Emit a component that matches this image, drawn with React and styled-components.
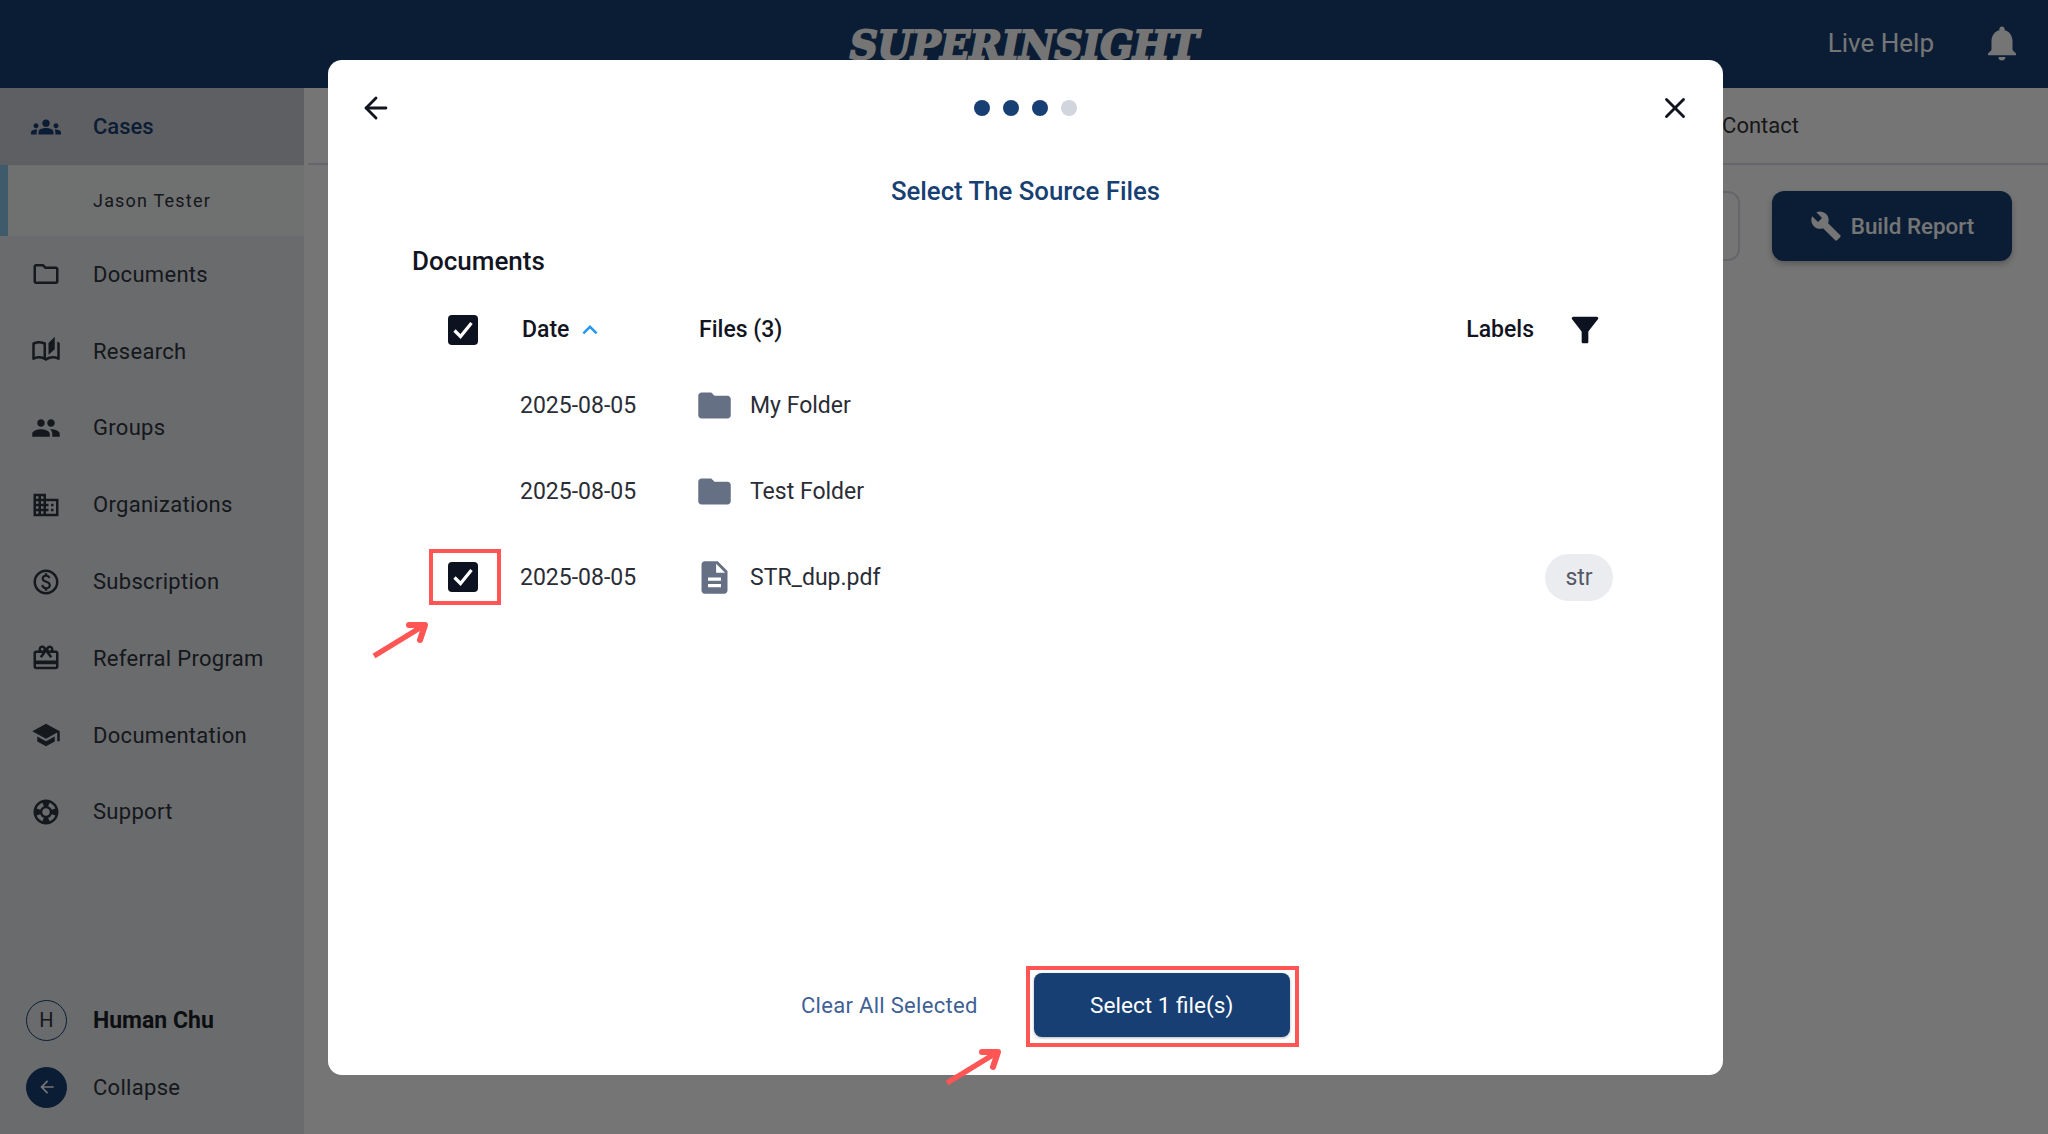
import React from "react";
import styled, { createGlobalStyle } from "styled-components";
import {
  MdGroups,
  MdOutlineFolder,
  MdOutlineAutoStories,
  MdPeople,
  MdOutlineDomain,
  MdOutlinePaid,
  MdOutlineRedeem,
  MdSchool,
  MdSupport,
  MdNotifications,
  MdBuild,
  MdFolder,
  MdDescription,
  MdFilterAlt,
  MdKeyboardArrowUp,
  MdArrowBack,
} from "react-icons/md";
import { ArrowLeft, X } from "lucide-react";

const NAVY = "#183f73";
const RED = "#ff5555";

const GlobalStyle = createGlobalStyle`
  html, body { margin: 0; padding: 0; height: 100%; }
  body { font-family: Roboto, "Liberation Sans", sans-serif; background: #fff; }
  * { box-sizing: border-box; }
`;

const Page = styled.div`
  position: relative;
  width: 100%;
  height: 100vh;
  display: flex;
  flex-direction: column;
  overflow: hidden;
`;

const Header = styled.header`
  height: 88px;
  flex: none;
  display: grid;
  grid-template-columns: 1fr auto 1fr;
  align-items: center;
  background: ${NAVY};
  color: #fff;
  padding: 0 25px;
`;

const Logo = styled.div`
  grid-column: 2;
  font-family: "DejaVu Serif", serif;
  font-weight: 700;
  font-style: italic;
  font-size: 39px;
  letter-spacing: -0.4px;
  -webkit-text-stroke: 2px #fff;
  padding-top: 2px;
`;

const HeaderRight = styled.div`
  grid-column: 3;
  display: flex;
  justify-content: flex-end;
  align-items: center;
  gap: 47px;
  font-size: 26px;
  line-height: 40px;
  padding-bottom: 2px;
`;

const Body = styled.div`
  flex: 1;
  display: flex;
  min-height: 0;
`;

const Sidebar = styled.nav`
  width: 304px;
  flex: none;
  display: flex;
  flex-direction: column;
  background: #e6e9ed;
  color: #2f3540;
`;

const CasesRow = styled.div`
  height: 77px;
  display: flex;
  align-items: center;
  padding-left: 31px;
  gap: 32px;
  background: #cdcfd7;
  color: ${NAVY};
  font-size: 22px;
  font-weight: 500;
`;

const SubRow = styled.div`
  height: 71px;
  display: flex;
  align-items: center;
  padding-left: 85px;
  background: #f1f3f5;
  border-left: 8px solid #87c4e9;
  font-size: 18px;
  letter-spacing: 1.2px;
`;

const NavList = styled.div`
  display: flex;
  flex-direction: column;
`;

const NavRow = styled.div`
  height: 76.8px;
  display: flex;
  align-items: center;
  padding-left: 31px;
  gap: 32px;
  font-size: 22px;
  letter-spacing: 0.3px;
  svg { flex: none; }
`;

const SideFooter = styled.div`
  margin-top: auto;
  display: flex;
  flex-direction: column;
  gap: 25px;
  padding: 0 0 26px 26px;
`;

const FooterRow = styled.div`
  display: flex;
  align-items: center;
  gap: 26px;
  height: 42px;
  font-size: ${(p) => (p.$bold ? "23px" : "22px")};
  font-weight: ${(p) => (p.$bold ? 700 : 400)};
  letter-spacing: ${(p) => (p.$bold ? 0 : "0.3px")};
  color: ${(p) => (p.$bold ? "#1b1f28" : "inherit")};
`;

const Avatar = styled.div`
  width: 41px;
  height: 41px;
  border-radius: 50%;
  display: flex;
  align-items: center;
  justify-content: center;
  font-size: 20px;
  font-weight: 400;
  color: #2f3540;
  background: ${(p) => (p.$filled ? NAVY : "transparent")};
  border: 1.5px solid ${NAVY};
`;

const Main = styled.main`
  flex: 1;
  display: flex;
  flex-direction: column;
  padding-left: 4px;
  background: #fff;
`;

const Tabs = styled.div`
  height: 77px;
  display: flex;
  align-items: center;
  justify-content: flex-end;
  padding-right: 249px;
  border-bottom: 2px solid #dcdfe6;
  font-size: 22px;
  color: #333;
`;

const Actions = styled.div`
  display: flex;
  justify-content: flex-end;
  gap: 32px;
  padding: 26px 36px 0 0;
`;

const OutlineButton = styled.div`
  width: 200px;
  height: 70px;
  border: 2px solid #dcdfe6;
  border-radius: 12px;
`;

const BuildButton = styled.div`
  width: 240px;
  height: 70px;
  display: flex;
  align-items: center;
  justify-content: center;
  gap: 9px;
  background: ${NAVY};
  color: #fff;
  border-radius: 12px;
  font-size: 22.4px;
  font-weight: 500;
  box-shadow: 0 3px 6px rgba(0, 0, 0, 0.25);
`;

const Scrim = styled.div`
  position: absolute;
  inset: 0;
  background: rgba(0, 0, 0, 0.54);
`;

const Modal = styled.section`
  position: absolute;
  left: 328px;
  top: 60px;
  width: 1395px;
  height: 1015px;
  display: flex;
  flex-direction: column;
  background: #fff;
  border-radius: 14px;
  color: #12151f;
`;

const ModalTop = styled.div`
  display: flex;
  align-items: center;
  justify-content: space-between;
  height: 96px;
  padding: 0 28px;
  flex: none;
`;

const IconButton = styled.div`
  width: 40px;
  height: 40px;
  display: flex;
  align-items: center;
  justify-content: center;
  color: #12151f;
`;

const Dots = styled.div`
  display: flex;
  gap: 13px;
`;

const Dot = styled.span`
  width: 16px;
  height: 16px;
  border-radius: 50%;
  background: ${(p) => (p.$on ? NAVY : "#d1d5de")};
`;

const Title = styled.h2`
  margin: 0;
  height: 72px;
  padding-top: 18px;
  flex: none;
  text-align: center;
  color: ${NAVY};
  font-size: 25.75px;
  line-height: 34px;
  font-weight: 500;
`;

const SectionTitle = styled.h3`
  margin: 0;
  padding-left: 84px;
  height: 67px;
  flex: none;
  font-size: 26px;
  line-height: 66px;
  font-weight: 500;
`;

const TableHead = styled.div`
  display: grid;
  grid-template-columns: 192px 179px 1fr;
  align-items: center;
  height: 67px;
  flex: none;
  padding: 2px 118px 0 0;
  font-size: 23px;
  font-weight: 500;
`;

const Row = styled.div`
  display: grid;
  grid-template-columns: 192px 179px 1fr;
  align-items: center;
  height: 86px;
  flex: none;
  padding-right: 110px;
  font-size: 23px;
  color: #2a2d36;
`;

const CheckCell = styled.div`
  grid-column: 1;
  padding-left: 120px;
`;

const Check = styled.span`
  position: relative;
  width: 30px;
  height: 30px;
  border-radius: 4px;
  background: #0d1220;
  display: flex;
  align-items: center;
  justify-content: center;
`;

const HighlightBox = styled.span`
  position: absolute;
  border: 4px solid ${RED};
  pointer-events: none;
  inset: ${(p) => p.$inset};
`;

const HeadDate = styled.div`
  grid-column: 2;
  display: flex;
  align-items: center;
  gap: 6px;
  margin-left: 2px;
  svg { color: #2196f3; }
`;

const HeadFiles = styled.div`
  grid-column: 3;
  display: flex;
  align-items: center;
  justify-content: space-between;
`;

const HeadLabels = styled.div`
  display: flex;
  align-items: center;
  gap: 31px;
`;

const DateCell = styled.div`
  grid-column: 2;
  white-space: nowrap;
`;

const FileCell = styled.div`
  grid-column: 3;
  display: flex;
  align-items: center;
  gap: 16px;
  margin-left: -4px;
  svg { color: #667085; flex: none; }
`;

const Chip = styled.span`
  margin-left: auto;
  width: 68px;
  height: 47px;
  border-radius: 24px;
  background: #ebecf0;
  color: #555962;
  display: flex;
  align-items: center;
  justify-content: center;
`;

const ModalFooter = styled.div`
  margin-top: auto;
  height: 102px;
  flex: none;
  padding-left: 473px;
  display: flex;
  align-items: flex-start;
  gap: 56px;
`;

const ClearLink = styled.div`
  height: 64px;
  display: flex;
  align-items: center;
  color: #3f5f95;
  font-size: 22px;
  letter-spacing: 0.3px;
  white-space: nowrap;
`;

const SelectButton = styled.div`
  position: relative;
  width: 256px;
  height: 64px;
  display: flex;
  align-items: center;
  justify-content: center;
  background: ${NAVY};
  color: #fff;
  border-radius: 8px;
  font-size: 22.6px;
  box-shadow: 0 1px 3px rgba(0, 0, 0, 0.3);
`;

const ArrowMark = styled.svg`
  position: absolute;
  overflow: visible;
  width: 60px;
  height: 40px;
  left: ${(p) => p.$left}px;
  top: ${(p) => p.$top}px;
`;

const Arrow = ({ left, top }) => (
  <ArrowMark viewBox="0 0 60 40" $left={left} $top={top}>
    <path d="M3 36 L52 6" stroke={RED} strokeWidth="5.5" fill="none" />
    <path d="M38 5 L54 5 L49 20" stroke={RED} strokeWidth="6" fill="none" strokeLinecap="round" strokeLinejoin="round" />
  </ArrowMark>
);

const CheckMark = () => (
  <svg width="24" height="24" viewBox="0 0 24 24">
    <path d="M3.5 12.5 L9.5 18.5 L20.5 5" stroke="#fff" strokeWidth="3.2" fill="none" />
  </svg>
);

const navItems = [
  { label: "Documents", Icon: MdOutlineFolder },
  { label: "Research", Icon: MdOutlineAutoStories },
  { label: "Groups", Icon: MdPeople },
  { label: "Organizations", Icon: MdOutlineDomain },
  { label: "Subscription", Icon: MdOutlinePaid },
  { label: "Referral Program", Icon: MdOutlineRedeem },
  { label: "Documentation", Icon: MdSchool },
  { label: "Support", Icon: MdSupport },
];

const files = [
  { date: "2025-08-05", name: "My Folder", Icon: MdFolder },
  { date: "2025-08-05", name: "Test Folder", Icon: MdFolder },
  { date: "2025-08-05", name: "STR_dup.pdf", Icon: MdDescription, checked: true, chip: "str" },
];

const App = () => (
  <Page>
    <GlobalStyle />
    <Header>
      <Logo>SUPERINSIGHT</Logo>
      <HeaderRight>
        <span>Live Help</span>
        <MdNotifications size={42} />
      </HeaderRight>
    </Header>
    <Body>
      <Sidebar>
        <CasesRow>
          <MdGroups size={30} />
          Cases
        </CasesRow>
        <SubRow>Jason Tester</SubRow>
        <NavList>
          {navItems.map(({ label, Icon }) => (
            <NavRow key={label}>
              <Icon size={30} />
              {label}
            </NavRow>
          ))}
        </NavList>
        <SideFooter>
          <FooterRow $bold>
            <Avatar>H</Avatar>
            Human Chu
          </FooterRow>
          <FooterRow>
            <Avatar $filled>
              <MdArrowBack size={20} color="#fff" />
            </Avatar>
            Collapse
          </FooterRow>
        </SideFooter>
      </Sidebar>
      <Main>
        <Tabs>Contact</Tabs>
        <Actions>
          <OutlineButton />
          <BuildButton>
            <MdBuild size={32} />
            Build Report
          </BuildButton>
        </Actions>
      </Main>
    </Body>
    <Scrim />
    <Modal>
      <ModalTop>
        <IconButton>
          <ArrowLeft size={34} strokeWidth={2} />
        </IconButton>
        <Dots>
          <Dot $on />
          <Dot $on />
          <Dot $on />
          <Dot />
        </Dots>
        <IconButton>
          <X size={34} strokeWidth={2} />
        </IconButton>
      </ModalTop>
      <Title>Select The Source Files</Title>
      <SectionTitle>Documents</SectionTitle>
      <TableHead>
        <CheckCell>
          <Check>
            <CheckMark />
          </Check>
        </CheckCell>
        <HeadDate>
          Date
          <MdKeyboardArrowUp size={30} />
        </HeadDate>
        <HeadFiles>
          Files (3)
          <HeadLabels>
            Labels
            <MdFilterAlt size={40} color="#0d1220" />
          </HeadLabels>
        </HeadFiles>
      </TableHead>
      {files.map(({ date, name, Icon, checked, chip }) => (
        <Row key={name}>
          {checked && (
            <CheckCell>
              <Check>
                <CheckMark />
                <HighlightBox $inset="-13px -23px -13px -19px" />
              </Check>
            </CheckCell>
          )}
          <DateCell>{date}</DateCell>
          <FileCell>
            <Icon size={39} />
            {name}
            {chip && <Chip>{chip}</Chip>}
          </FileCell>
        </Row>
      ))}
      <ModalFooter>
        <ClearLink>Clear All Selected</ClearLink>
        <SelectButton>
          Select 1 file(s)
          <HighlightBox $inset="-7px -9px -10px -8px" />
        </SelectButton>
      </ModalFooter>
      <Arrow left={43} top={560} />
      <Arrow left={616} top={987} />
    </Modal>
  </Page>
);

export default App;
